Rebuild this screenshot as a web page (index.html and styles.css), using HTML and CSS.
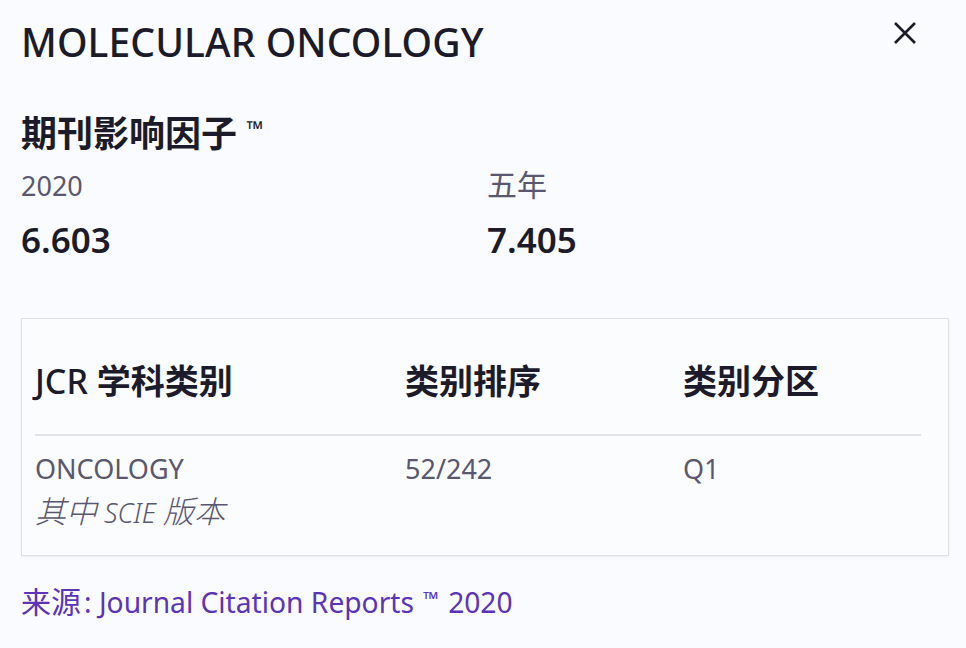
FILE: index.html
```html
<!DOCTYPE html>
<html lang="zh-CN">
<head>
    <meta charset="UTF-8">
    <meta name="viewport" content="width=device-width, initial-scale=1.0">
    <title>Molecular Oncology</title>
    <link rel="stylesheet" href="styles.css">
</head>
<body>
    <div class="panel">
        <header class="panel-head">
            <h1 class="journal-title">MOLECULAR ONCOLOGY</h1>
            <button class="close-btn" aria-label="关闭">
                <svg width="24" height="24" viewBox="0 0 24 24"><path d="M2 2 L22 22 M22 2 L2 22" stroke="#1c1b2b" stroke-width="2.6" fill="none"/></svg>
            </button>
        </header>

        <h2 class="section-title">期刊影响因子 <span class="tm">™</span></h2>
        <div class="factors">
            <div class="factor">
                <div class="factor-label">2020</div>
                <div class="factor-value">6.603</div>
            </div>
            <div class="factor">
                <div class="factor-label"><span class="cjk">五年</span></div>
                <div class="factor-value">7.405</div>
            </div>
        </div>

        <div class="jcr-box">
            <div class="jcr-row jcr-head">
                <div><span class="latin">JCR</span> 学科类别</div>
                <div>类别排序</div>
                <div>类别分区</div>
            </div>
            <div class="jcr-row jcr-body">
                <div>ONCOLOGY<br><em class="edition"><span class="cjk">其中</span> SCIE <span class="cjk">版本</span></em></div>
                <div>52/242</div>
                <div>Q1</div>
            </div>
        </div>

        <p class="source"><span class="cjk">来源</span>: Journal Citation Reports <span class="tm-small">™</span> 2020</p>
    </div>
</body>
</html>
```

FILE: styles.css
```css
body {
    margin: 0;
    padding: 0;
    background-color: #fafbfe;
    color: #1c1b2b;
    font-family: "Noto Sans", "Noto Sans CJK SC", sans-serif;
}
.cjk {
    font-size: 30px;
    line-height: 1;
}
.panel {
    padding: 18px 17px 0 21px;
}
.panel-head {
    display: flex;
    justify-content: space-between;
    align-items: flex-start;
}
.journal-title {
    margin: 0;
    font-size: 39px;
    font-weight: 500;
    line-height: 48px;
    letter-spacing: 0.1px;
}
.close-btn {
    background: none;
    border: none;
    padding: 0;
    margin: 3px 32px 0 0;
    cursor: pointer;
}
.section-title {
    margin: 40px 0 0;
    font-size: 36px;
    font-weight: 700;
    line-height: 44px;
}
.tm {
    font-size: 22px;
    vertical-align: 10px;
}
.factors {
    display: grid;
    grid-template-columns: 466px 1fr;
    margin-top: 12px;
}
.factor-label {
    font-size: 27px;
    line-height: 36px;
    color: #5a5770;
}
.factor-value {
    margin-top: 16px;
    font-size: 35px;
    font-weight: 600;
    line-height: 40px;
}
.jcr-box {
    margin-top: 58px;
    width: 886px;
    padding: 0 27px 0 13px;
    border: 1px solid #dde0e7;
    box-shadow: 0 1px 2px rgba(0, 0, 0, 0.06);
    background-color: #fbfcfe;
}
.jcr-row {
    display: grid;
    grid-template-columns: 370px 278px 1fr;
}
.jcr-head {
    padding: 40px 0 31px;
    font-size: 34px;
    font-weight: 700;
    line-height: 44px;
    border-bottom: 2px solid #e1e3e8;
}
.jcr-head .latin {
    font-weight: 500;
}
.jcr-body {
    padding: 11px 0 20px;
    font-size: 27px;
    line-height: 44px;
    color: #5a5770;
}
.edition {
    font-style: italic;
    font-weight: 300;
}
.edition .cjk {
    font-size: 31px;
}
.source {
    margin: 25px 0 0;
    font-size: 28.2px;
    line-height: 36px;
    color: #5b34b8;
}
.source .cjk {
    margin-right: 3px;
}
.tm-small {
    font-size: 20px;
    vertical-align: 7px;
    margin: 0 2px;
}
```
